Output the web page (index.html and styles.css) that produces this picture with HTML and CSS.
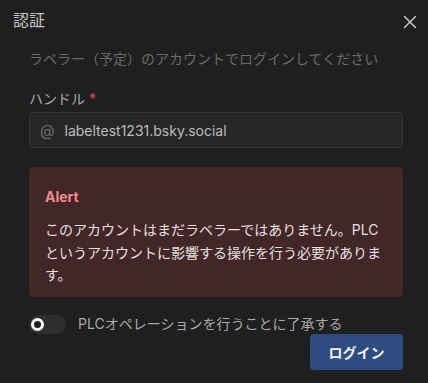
FILE: index.html
```html
<!DOCTYPE html>
<html lang="ja">
<head>
<meta charset="utf-8">
<link rel="stylesheet" href="styles.css">
</head>
<body>
<div class="dialog">
  <div class="header">
    <h1 class="title">認証</h1>
    <button class="close" aria-label="close">
      <svg width="14" height="14" viewBox="0 0 14 14"><path d="M1.5 1.5 L12.5 12.5 M12.5 1.5 L1.5 12.5" stroke="#c8c8c8" stroke-width="1.5" stroke-linecap="round"/></svg>
    </button>
  </div>
  <div class="body">
    <p class="subtitle">ラベラー（予定）のアカウントでログインしてください</p>
    <label class="label">ハンドル <span class="req">*</span></label>
    <div class="input">
      <span class="at">@</span>
      <span class="value">labeltest1231.bsky.social</span>
    </div>
    <div class="alert">
      <div class="alert-title">Alert</div>
      <div class="alert-text">このアカウントはまだラベラーではありません。PLCというアカウントに影響する操作を行う必要があります。</div>
    </div>
    <div class="toggle-row">
      <span class="switch"><span class="knob"></span></span>
      <span class="toggle-label">PLCオペレーションを行うことに了承する</span>
    </div>
    <div class="actions">
      <button class="btn">ログイン</button>
    </div>
  </div>
</div>
</body>
</html>
```
FILE: styles.css
```css
html, body {
  margin: 0;
  padding: 0;
  background: #1f1f1f;
}
body {
  font-family: Inter, "Noto Sans CJK JP", sans-serif;
  color: #c9c9c9;
  width: 428px;
  height: 383px;
  overflow: hidden;
}
.dialog {
  display: flex;
  flex-direction: column;
}
.header {
  display: flex;
  justify-content: space-between;
  align-items: center;
  padding: 7px 11px 0 13px;
  height: 26px;
}
.title {
  margin: 0;
  font-size: 16px;
  font-weight: 400;
  color: #c4c4c4;
  line-height: 24px;
}
.close {
  background: none;
  border: 0;
  padding: 0;
  width: 14px;
  height: 14px;
  display: flex;
  margin-top: 3px;
}
.body {
  padding: 0 25px 0 29px;
  display: flex;
  flex-direction: column;
}
.subtitle {
  margin: 16px 0 0;
  font-size: 14px;
  line-height: 20px;
  color: #6a6a6a;
}
.label {
  margin-top: 20px;
  font-size: 14px;
  line-height: 20px;
  color: #a8a8a8;
}
.req {
  color: #e5484d;
}
.input {
  margin-top: 3px;
  height: 34px;
  border: 1px solid #363636;
  border-radius: 4px;
  background: #262626;
  display: flex;
  align-items: center;
  padding: 0 10px;
  gap: 10px;
  font-size: 14px;
}
.at {
  color: #6f6f6f;
  font-size: 15px;
}
.value {
  color: #bdbdbd;
}
.alert {
  margin-top: 19px;
  height: 130px;
  box-sizing: border-box;
  background: #432628;
  border-radius: 4px;
  padding: 20px 16px 0;
}
.alert-title {
  color: #f08c8c;
  font-weight: 700;
  font-size: 14px;
  line-height: 20px;
}
.alert-text {
  margin-top: 12px;
  font-size: 14px;
  line-height: 22.5px;
  color: #e6e0e0;
}
.toggle-row {
  margin-top: 17px;
  display: flex;
  align-items: center;
  gap: 12px;
}
.switch {
  width: 37px;
  height: 19px;
  border-radius: 10px;
  background: #2e2e2e;
  display: flex;
  align-items: center;
  padding-left: 2px;
  box-sizing: border-box;
}
.knob {
  width: 7px;
  height: 7px;
  border-radius: 50%;
  border: 3px solid #ffffff;
  background: #1f1f1f;
}
.toggle-label {
  font-size: 14px;
  line-height: 20px;
  color: #a8a8a8;
}
.actions {
  display: flex;
  justify-content: flex-end;
  margin-top: 0;
}
.btn {
  width: 93px;
  height: 36px;
  border: 0;
  border-radius: 4px;
  background: #2f4c80;
  color: #f2f2f2;
  font-family: Inter, "Noto Sans CJK JP", sans-serif;
  font-weight: 700;
  font-size: 14px;
}
```
